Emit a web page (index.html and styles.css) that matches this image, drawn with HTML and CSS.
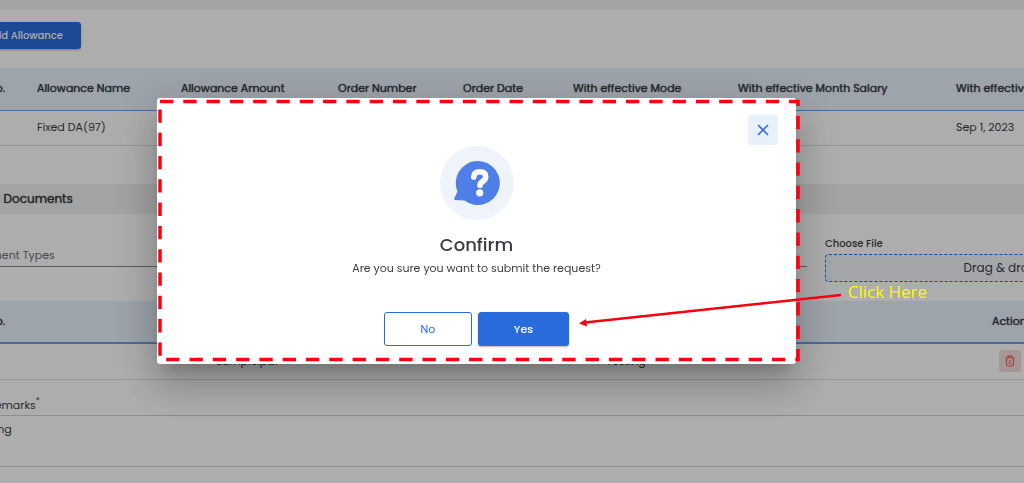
FILE: index.html
```html
<!DOCTYPE html>
<html lang="en">
<head>
  <meta charset="UTF-8">
  <meta name="viewport" content="width=device-width, initial-scale=1.0">
  <title>Allowance Request</title>
  <link rel="stylesheet" href="styles.css">
</head>
<body>
  <!-- Request form -->
  <main class="page">
    <div class="toolbar">
      <button type="button" class="btn btn-primary btn-add">Add Allowance</button>
    </div>

    <table class="grid allowances">
      <colgroup>
        <col class="col-no"><col class="col-name"><col class="col-amount"><col class="col-number">
        <col class="col-date"><col class="col-mode"><col class="col-salary"><col>
      </colgroup>
      <thead>
        <tr>
          <th>Sl No.</th>
          <th>Allowance Name</th>
          <th>Allowance Amount</th>
          <th>Order Number</th>
          <th>Order Date</th>
          <th>With effective Mode</th>
          <th>With effective Month Salary</th>
          <th>With effective Date</th>
        </tr>
      </thead>
      <tbody>
        <tr>
          <td>1</td>
          <td>Fixed DA(97)</td>
          <td></td>
          <td></td>
          <td></td>
          <td></td>
          <td></td>
          <td>Sep 1, 2023</td>
        </tr>
      </tbody>
    </table>

    <h2 class="section-title">Add Documents</h2>

    <div class="upload-row">
      <select class="doc-type" aria-label="Document Types">
        <option>Document Types</option>
      </select>
      <div class="file-field">
        <label for="dropzone">Choose File</label>
        <button type="button" class="dropzone" id="dropzone">Drag &amp; drop files here</button>
      </div>
    </div>

    <table class="grid documents">
      <colgroup>
        <col class="col-doc-no"><col class="col-file"><col class="col-type"><col>
      </colgroup>
      <thead>
        <tr>
          <th>Sl No.</th>
          <th></th>
          <th></th>
          <th>Action</th>
        </tr>
      </thead>
      <tbody>
        <tr>
          <td>1</td>
          <td>sample.pdf</td>
          <td>Testing</td>
          <td>
            <button type="button" class="btn-delete" aria-label="Delete">
              <svg width="12" height="12" viewBox="0 0 12 12" fill="none" stroke="#e5605f" stroke-width="1.2">
                <path d="M1.500 3h9M4 3V1.200h4V3M2.500 3v6.500q0 1.500 1.500 1.500h4q1.500 0 1.500-1.500V3M4.700 6h2.600M4.700 8.200h2.600"/>
              </svg>
            </button>
          </td>
        </tr>
      </tbody>
    </table>

    <label class="remarks-label" for="remarks">Remarks<sup>*</sup></label>
    <textarea class="remarks" id="remarks">testing</textarea>
  </main>

  <!-- Confirm dialog -->
  <div class="overlay">
    <div class="dialog" role="dialog" aria-labelledby="dialogTitle">
      <button type="button" class="btn-close" aria-label="Close">
        <svg width="12" height="12" viewBox="0 0 12 12" stroke="#3a6fd8" stroke-width="1.7">
          <path d="M1 1l10 10M11 1L1 11"/>
        </svg>
      </button>
      <svg class="dialog-icon" width="74" height="74" viewBox="0 0 74 74">
        <circle cx="37" cy="37" r="37" fill="#eff4fa"/>
        <path d="M38 15a22 22 0 1 1-13.500 39.500L15 54q-1.500-.5-.6-2L17.500 45.500A22 22 0 0 1 38 15z" fill="#4d7fe6"/>
        <path d="M33.700 31q.3-5.300 6-5.300 6 0 6 5 0 3-3 4.800-2.700 1.600-2.700 4" fill="none" stroke="#fff" stroke-width="5.600" stroke-linecap="round"/>
        <circle cx="39.700" cy="46.800" r="3.600" fill="#fff"/>
      </svg>
      <h1 id="dialogTitle">Confirm</h1>
      <p>Are you sure you want to submit the request?</p>
      <div class="dialog-actions">
        <button type="button" class="btn btn-outline">No</button>
        <button type="button" class="btn btn-primary">Yes</button>
      </div>

      <!-- Callout: dashed frame and arrow -->
      <svg class="callout" viewBox="0 0 639 265">
        <path d="M3 3H641V261H3Z" fill="none" stroke="#fb000f" stroke-width="3.500" stroke-dasharray="13.300 10"/>
        <path d="M684 196.500L428 224" stroke="#f5000f" stroke-width="2.300"/>
        <path d="M422 225l7-4.500 1 7.500z" fill="#f5000f"/>
      </svg>
      <span class="callout-text">Click Here</span>
    </div>
  </div>
</body>
</html>
```

FILE: styles.css
```css
* {
  box-sizing: border-box;
}
body {
  font-family: Poppins, Inter, sans-serif;
  font-size: 11px;
  color: #3a3c42;
  margin: 0;
  height: 100vh;
  overflow: hidden;
  background: #fff;
}
button, select, textarea {
  font: inherit;
  color: inherit;
}
/* The form is wider than the window on both sides */
.page {
  margin: 0 -224px 0 -40px;
  border-top: 10px solid #f0f0f0;
}
.toolbar {
  padding: 12px 16px 19px;
}
.btn {
  height: 34px;
  border-radius: 3px;
  border: 1px solid #2a6bdb;
}
.btn-primary {
  background: #2a6bdb;
  color: #fff;
  font-weight: 500;
  box-shadow: 0 1px 2px rgba(0, 0, 0, 0.3);
}
.btn-add {
  width: 105px;
  height: 27px;
  padding: 0 17px 0 0;
  font-size: 10px;
  text-align: right;
}
/* Tables */
.grid {
  width: 100%;
  table-layout: fixed;
  border-collapse: collapse;
  text-align: left;
}
.grid th {
  height: 42px;
  padding: 0 16px;
  background: #e9f2fd;
  border-bottom: 1px solid #6f9fe0;
  font-weight: 400;
  text-shadow: 0 0 1px #3a3c42;
  white-space: nowrap;
}
.grid td {
  height: 35px;
  padding: 0 16px;
  border-bottom: 1px solid #dcdcdc;
}
.col-no { width: 61px; }
.col-name { width: 144px; }
.col-amount { width: 157px; }
.col-number { width: 125px; }
.col-date { width: 110px; }
.col-mode { width: 165px; }
.col-salary { width: 218px; }
.col-doc-no { width: 240px; }
.col-file { width: 390px; }
.col-type { width: 386px; }
.section-title {
  margin: 38px 0 0;
  padding: 0 0 0 16px;
  background: #f0f0f0;
  font-size: 12px;
  font-weight: 400;
  line-height: 30px;
  text-shadow: 0 0 1px #3a3c42;
}
.upload-row {
  display: grid;
  grid-template-columns: 845px 1fr;
  gap: 18px;
  padding: 21px 16px 19px 2px;
}
.doc-type {
  align-self: end;
  height: 22px;
  margin-bottom: 15px;
  padding: 0;
  border: 0;
  border-bottom: 1px solid #85878c;
  background: none;
  appearance: none;
  color: #6a6c72;
}
.file-field label {
  display: block;
  margin-bottom: 1px;
  font-size: 10px;
  font-weight: 500;
  line-height: 18px;
}
.dropzone {
  display: block;
  width: 100%;
  height: 28px;
  border: 1px dashed #2a6bdb;
  border-radius: 4px;
  background: #f3f5fa;
  font-size: 12px;
}
.documents th {
  border-bottom-width: 2px;
}
.documents td {
  height: 37px;
}
.btn-delete {
  display: flex;
  align-items: center;
  justify-content: center;
  width: 22px;
  height: 22px;
  margin-left: 7px;
  padding: 0;
  border: 0;
  border-radius: 3px;
  background: #f7dedd;
}
.remarks-label {
  display: block;
  padding: 15px 28px 0;
  line-height: 20px;
}
.remarks-label sup {
  font-size: 8px;
  line-height: 0;
}
.remarks {
  display: block;
  width: 100%;
  height: 52px;
  padding: 5px 14px;
  border: 1px solid #d0d0d4;
  border-width: 1px 0;
  background: none;
  resize: none;
}
/* Confirm dialog */
.overlay {
  position: fixed;
  inset: 0;
  display: flex;
  align-items: center;
  justify-content: center;
  padding: 0 71px 21px 0;
  background: rgba(0, 0, 0, 0.32);
}
.dialog {
  position: relative;
  display: flex;
  flex-direction: column;
  align-items: center;
  width: 639px;
  padding: 48px 18px 18px;
  border-radius: 3px;
  background: #fff;
  box-shadow: 0 11px 15px -7px rgba(0, 0, 0, 0.2), 0 24px 38px 3px rgba(0, 0, 0, 0.14), 0 9px 46px 8px rgba(0, 0, 0, 0.12);
}
.dialog h1 {
  margin: 13px 0 0;
  font-size: 18px;
  font-weight: 500;
  line-height: 24px;
}
.dialog p {
  margin: 1px 0 34px;
  line-height: 20px;
}
.dialog-actions {
  display: flex;
  gap: 6px;
}
.btn-outline {
  width: 88px;
  background: #fff;
  color: #2a6bdb;
}
.dialog-actions .btn-primary {
  width: 91px;
}
.btn-close {
  position: absolute;
  top: 17px;
  right: 18px;
  display: flex;
  align-items: center;
  justify-content: center;
  width: 30px;
  height: 30px;
  padding: 0;
  border: 0;
  border-radius: 3px;
  background: #e8f0fa;
}
.callout {
  position: absolute;
  top: 0;
  left: 0;
  width: 100%;
  height: 100%;
  overflow: visible;
  pointer-events: none;
}
.callout-text {
  position: absolute;
  top: 182px;
  left: 691px;
  font-family: "Open Sans", sans-serif;
  font-size: 17px;
  line-height: 24px;
  color: #ffff00;
  white-space: nowrap;
}
```
